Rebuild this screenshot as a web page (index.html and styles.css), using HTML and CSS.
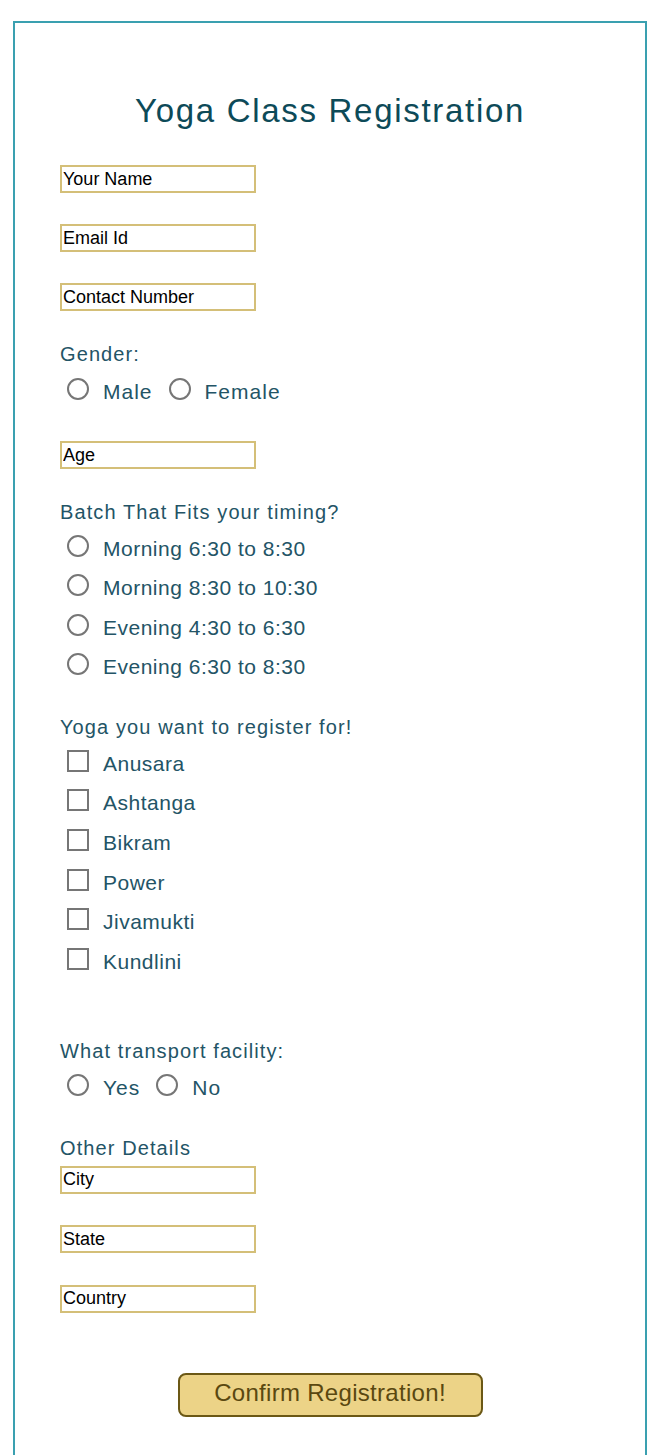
FILE: index.html
```html
<!DOCTYPE html>
<html lang="en">
<head>
<meta charset="utf-8">
<title>Yoga Class Registration</title>
<link rel="stylesheet" href="styles.css">
</head>
<body>
<div class="card">
  <h1 class="title">Yoga Class Registration</h1>
  <form class="form">
    <input class="field" type="text" placeholder="Your Name">
    <input class="field" type="text" placeholder="Email Id">
    <input class="field third" type="text" placeholder="Contact Number">

    <div class="group gender">
      <div class="label">Gender:</div>
      <div class="opts inline-opts">
        <label class="opt"><input type="radio" name="gender"><span>Male</span></label>
        <label class="opt"><input type="radio" name="gender"><span>Female</span></label>
      </div>
    </div>

    <input class="field age" type="text" placeholder="Age">

    <div class="group batch">
      <div class="label">Batch That Fits your timing?</div>
      <div class="opts stack-opts">
        <label class="opt"><input type="radio" name="batch"><span>Morning 6:30 to 8:30</span></label>
        <label class="opt"><input type="radio" name="batch"><span>Morning 8:30 to 10:30</span></label>
        <label class="opt"><input type="radio" name="batch"><span>Evening 4:30 to 6:30</span></label>
        <label class="opt"><input type="radio" name="batch"><span>Evening 6:30 to 8:30</span></label>
      </div>
    </div>

    <div class="group yoga">
      <div class="label">Yoga you want to register for!</div>
      <div class="opts stack-opts checks">
        <label class="opt"><input type="checkbox"><span>Anusara</span></label>
        <label class="opt"><input type="checkbox"><span>Ashtanga</span></label>
        <label class="opt"><input type="checkbox"><span>Bikram</span></label>
        <label class="opt"><input type="checkbox"><span>Power</span></label>
        <label class="opt"><input type="checkbox"><span>Jivamukti</span></label>
        <label class="opt"><input type="checkbox"><span>Kundlini</span></label>
      </div>
    </div>

    <div class="group transport">
      <div class="label">What transport facility:</div>
      <div class="opts inline-opts">
        <label class="opt"><input type="radio" name="transport"><span>Yes</span></label>
        <label class="opt"><input type="radio" name="transport"><span>No</span></label>
      </div>
    </div>

    <div class="group details">
      <div class="label">Other Details</div>
      <input class="field" type="text" placeholder="City">
      <input class="field" type="text" placeholder="State">
      <input class="field last" type="text" placeholder="Country">
    </div>

    <div class="actions">
      <button class="confirm" type="button">Confirm Registration!</button>
    </div>
  </form>
</div>
</body>
</html>
```

FILE: styles.css
```css
html, body {
  margin: 0;
  padding: 0;
  background: #ffffff;
}

body {
  font-family: "Liberation Sans", Arial, sans-serif;
  padding: 21px 0 0 13px;
}

.card {
  width: 634px;
  box-sizing: border-box;
  min-height: 1460px;
  border: 2px solid #3aa0b0;
  border-bottom: none;
  padding: 0 0 0 45px;
}

.title {
  margin: 0 0 0 -45px;
  padding-top: 69px;
  height: 142px;
  box-sizing: border-box;
  text-align: center;
  font-weight: normal;
  font-size: 33px;
  line-height: 38px;
  letter-spacing: 1.7px;
  color: #0d4a58;
}

.form {
  display: flex;
  flex-direction: column;
  align-items: flex-start;
}

.field {
  width: 196px;
  height: 28px;
  box-sizing: border-box;
  border: 2px solid #d4bf78;
  padding: 0 1px;
  margin: 0 0 31px 0;
  font-family: "Liberation Sans", Arial, sans-serif;
  font-size: 18px;
  color: #000;
  background: #fff;
  outline: none;
}

.field.third {
  margin-bottom: 31px;
}

.field::placeholder {
  color: #000;
  opacity: 1;
}

.group {
  display: flex;
  flex-direction: column;
  align-items: flex-start;
}

.label {
  font-size: 20px;
  line-height: 24px;
  letter-spacing: 1.1px;
  color: #235466;
}

.opts {
  margin-top: 5px;
}

.opt {
  display: flex;
  align-items: center;
  height: 39.5px;
  font-size: 21px;
  letter-spacing: 0.5px;
  color: #235466;
}

.checks .opt {
  height: 39.6px;
}

.opt input {
  appearance: none;
  -webkit-appearance: none;
  width: 22px;
  height: 22px;
  box-sizing: border-box;
  border: 2px solid #767676;
  background: #fff;
  margin: 0 14px 0 7px;
  flex: none;
  position: relative;
  top: -3px;
}

.opt input[type="radio"] {
  border-radius: 50%;
}

.opt input[type="checkbox"] {
  border-radius: 0;
}

.inline-opts {
  display: flex;
  gap: 16px;
}

.inline-opts .opt {
  height: 40px;
  letter-spacing: 1px;
}

.inline-opts .opt + .opt input {
  margin-left: 0;
}

.gender {
  margin-top: 0;
  margin-bottom: 29px;
}

.gender .opts {
  margin-top: 6px;
}

.batch {
  margin-bottom: 28px;
}

.yoga {
  margin-bottom: 57px;
}

.transport {
  margin-bottom: 28px;
}

.details .field {
  margin-bottom: 31.5px;
}

.details .label {
  margin-bottom: 6px;
}

.details .field.last {
  margin-bottom: 0;
}

.actions {
  align-self: stretch;
  margin-left: -45px;
  display: flex;
  justify-content: center;
  padding-top: 60px;
}

.confirm {
  width: 305px;
  height: 44px;
  box-sizing: border-box;
  border: 2px solid #6b5815;
  border-radius: 8px;
  background: #ecd387;
  color: #5a4810;
  font-family: "Liberation Sans", Arial, sans-serif;
  font-size: 24px;
  line-height: 26px;
  letter-spacing: 0.3px;
  padding: 0 0 4px 0;
}
```
